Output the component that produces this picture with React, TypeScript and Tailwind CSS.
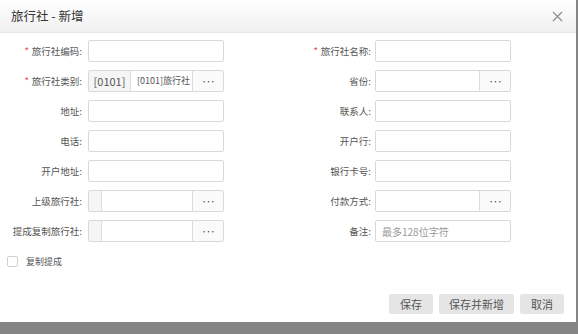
import React from 'react';

type Field = {
  label: string;
  required?: boolean;
  kind: 'text' | 'pick' | 'code' | 'tree';
  prefix?: string;
  value?: string;
  placeholder?: string;
};

const left: Field[] = [
  { label: '旅行社编码', required: true, kind: 'text' },
  { label: '旅行社类别', required: true, kind: 'code', prefix: '[0101]', value: '[0101]旅行社' },
  { label: '地址', kind: 'text' },
  { label: '电话', kind: 'text' },
  { label: '开户地址', kind: 'text' },
  { label: '上级旅行社', kind: 'tree' },
  { label: '提成复制旅行社', kind: 'tree' },
];

const right: Field[] = [
  { label: '旅行社名称', required: true, kind: 'text' },
  { label: '省份', kind: 'pick' },
  { label: '联系人', kind: 'text' },
  { label: '开户行', kind: 'text' },
  { label: '银行卡号', kind: 'text' },
  { label: '付款方式', kind: 'pick' },
  { label: '备注', kind: 'text', placeholder: '最多128位字符' },
];

function Dots() {
  return (
    <div className="w-[31px] shrink-0 h-full border-l border-[#dcdcdc] bg-[#fafafa] flex items-center justify-center">
      <svg width="11" height="3" viewBox="0 0 11 3">
        <rect x="0.5" y="1" width="1.4" height="1.4" fill="#666" />
        <rect x="4.8" y="1" width="1.4" height="1.4" fill="#666" />
        <rect x="9.1" y="1" width="1.4" height="1.4" fill="#666" />
      </svg>
    </div>
  );
}

function Input({ f }: { f: Field }) {
  const box = 'w-[136px] h-[22px] border border-[#d9d9d9] rounded-[2px] bg-white flex overflow-hidden';
  if (f.kind === 'code') {
    return (
      <div className={box}>
        <div className="w-[42px] shrink-0 h-full bg-[#f5f5f5] border-r border-[#dcdcdc] flex items-center justify-center text-[11px] text-[#555]">{f.prefix}</div>
        <div className="flex-1 min-w-0 flex items-center pl-[6px] text-[9px] text-[#555] whitespace-nowrap overflow-hidden">{f.value}</div>
        <Dots />
      </div>
    );
  }
  if (f.kind === 'tree') {
    return (
      <div className={box}>
        <div className="w-[13px] shrink-0 h-full bg-[#f5f5f5] border-r border-[#dcdcdc]" />
        <div className="flex-1" />
        <Dots />
      </div>
    );
  }
  if (f.kind === 'pick') {
    return (
      <div className={box}>
        <div className="flex-1" />
        <Dots />
      </div>
    );
  }
  return (
    <div className={box}>
      <div className="flex-1 flex items-center pl-[6px] text-[#999] text-[10px]">{f.placeholder}</div>
    </div>
  );
}

function Row({ f, labelW, gap }: { f: Field; labelW: string; gap: string }) {
  return (
    <div className="flex items-center h-[22px]">
      <div className={`${labelW} text-right text-[9.5px] text-[#555] whitespace-nowrap`}>
        {f.required && <span className="text-[#e4393c] mr-[3px]">*</span>}
        {f.label}:
      </div>
      <div className={gap}>
        <Input f={f} />
      </div>
    </div>
  );
}

export default function App() {
  return (
    <div className="w-[578px] h-[334px] bg-[#858585] overflow-hidden" style={{ fontFamily: '"Noto Sans CJK SC", "Noto Sans", sans-serif' }}>
      <div className="w-[576px] h-[322px] bg-white flex flex-col">
        {/* header */}
        <div className="h-[33px] bg-gradient-to-b from-white to-[#f0f0f0] flex items-center justify-between pl-[11px] pr-[11px] border-b border-[#e8e8e8]">
          <span className="text-[12.5px] text-[#333]">旅行社 - 新增</span>
          <svg width="11" height="11" viewBox="0 0 11 11" className="mr-[2px]">
            <path d="M1 1 L10 10 M10 1 L1 10" stroke="#8a8a8a" strokeWidth="1.1" />
          </svg>
        </div>

        {/* form */}
        <div className="pt-[7px] grid grid-cols-[288px_288px]">
          <div className="flex flex-col gap-[8px]">
            {left.map((f) => (
              <Row key={f.label} f={f} labelW="w-[82px]" gap="ml-[6px]" />
            ))}
          </div>
          <div className="flex flex-col gap-[8px]">
            {right.map((f) => (
              <Row key={f.label} f={f} labelW="w-[83px]" gap="ml-[4px]" />
            ))}
          </div>
        </div>

        <label className="flex items-center mt-[14px] ml-[7px] h-[11px]">
          <span className="w-[11px] h-[11px] border border-[#cfcfcf] rounded-[2px] bg-white" />
          <span className="ml-[8px] text-[9px] text-[#555]">复制提成</span>
        </label>

        {/* footer */}
        <div className="mt-auto mb-[8px] flex justify-end gap-[6px] pr-[12px]">
          <button className="w-[44px] h-[20px] bg-[#e5e5e6] text-[11px] text-[#555] rounded-[2px]">保存</button>
          <button className="w-[75px] h-[20px] bg-[#e5e5e6] text-[11px] text-[#555] rounded-[2px]">保存并新增</button>
          <button className="w-[44px] h-[20px] bg-[#e5e5e6] text-[11px] text-[#555] rounded-[2px]">取消</button>
        </div>
      </div>
    </div>
  );
}
